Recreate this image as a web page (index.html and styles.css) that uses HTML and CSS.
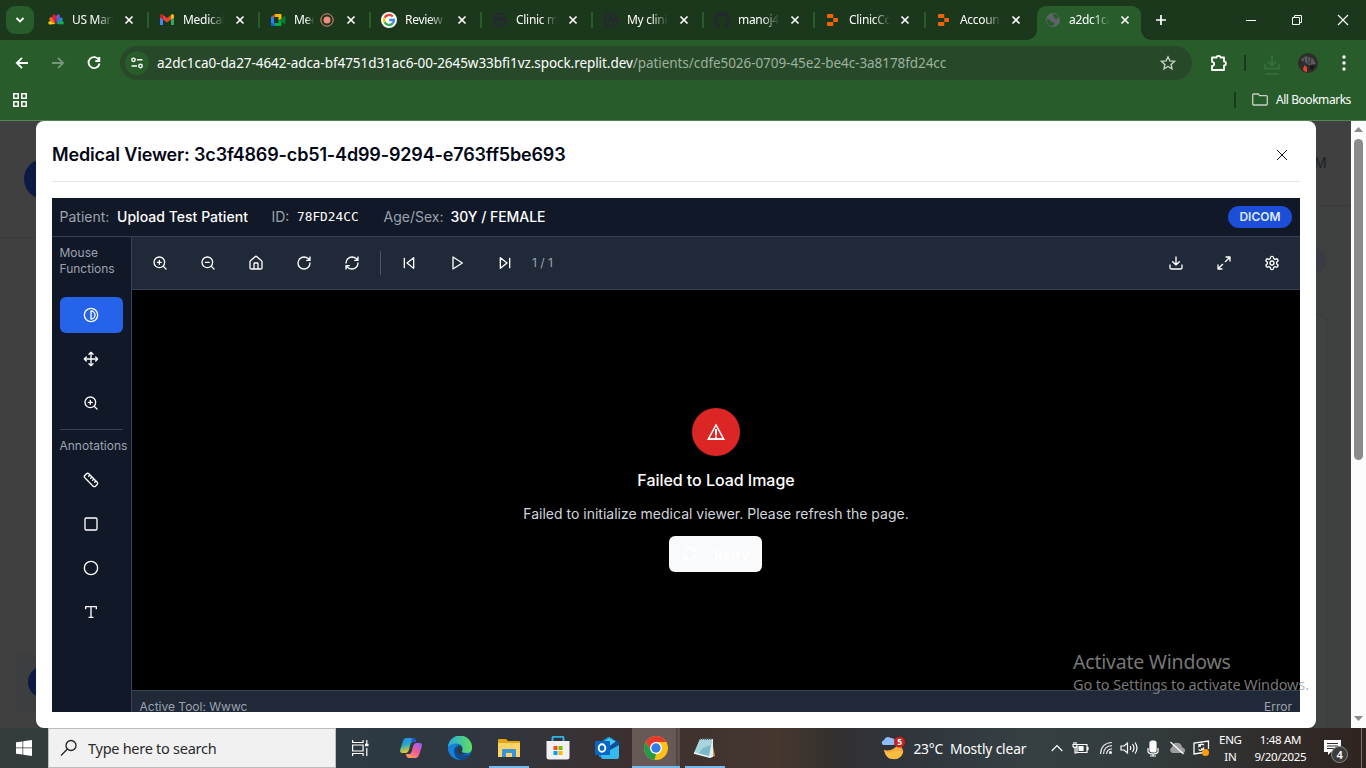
FILE: index.html
```html
<!DOCTYPE html>
<html lang="en">
<head>
<meta charset="utf-8">
<title>Medical Viewer</title>
<link rel="stylesheet" href="styles.css">
</head>
<body>
<svg class="defs" width="0" height="0" aria-hidden="true">
  <symbol id="x" viewBox="0 0 10 10"><path d="M1.5 1.5l7 7M8.5 1.5l-7 7" fill="none" stroke="currentColor" stroke-width="1.7"/></symbol>
  <symbol id="zoomin" viewBox="0 0 24 24"><circle cx="11" cy="11" r="8"/><path d="M21 21l-4.35-4.35M11 8v6M8 11h6"/></symbol>
  <symbol id="zoomout" viewBox="0 0 24 24"><circle cx="11" cy="11" r="8"/><path d="M21 21l-4.35-4.35M8 11h6"/></symbol>
  <symbol id="refresh" viewBox="0 0 24 24"><path d="M3 12a9 9 0 0 1 9-9 9.75 9.75 0 0 1 6.74 2.74L21 8M21 3v5h-5M21 12a9 9 0 0 1-9 9 9.75 9.75 0 0 1-6.74-2.74L3 16M8 16H3v5"/></symbol>
  <symbol id="replit" viewBox="0 0 16 16"><path d="M3 2h4.5q.8 0 .8.8V6H3q-1 0-1-.8V2.800Q2 2 3 2zM8.300 6H12q1 0 1 .8v2.400q0 .8-1 .8H8.300zM3 10h5.300v3.200q0 .8-.8.8H3q-1 0-1-.8v-2.400Q2 10 3 10z" fill="#f26207"/></symbol>
  <symbol id="copilot" viewBox="0 0 16 16"><path d="M2.500 6C1.800 2 3 1 5.500 1 7.500 1 8 2 8 3c0-1 .5-2 2.500-2C13 1 14.200 2 13.500 6c2 1 2 2 2 4-1 3-4.500 5-7.500 5S1.500 13 .5 10c0-2 0-3 2-4z" fill="#24292f"/><path d="M4 3h2.500v2.500h-3zM9.500 3H12l.5 2.500h-3zM3.500 8.500h9v3.300q-4.500 2-9 0z" fill="#1b3a1c"/><path d="M6 9v2.500M10 9v2.500" stroke="#24292f" stroke-width="1.500"/></symbol>
</svg>

<header class="tabstrip">
  <div class="tabsearch"><svg width="10" height="10" viewBox="0 0 10 10"><path d="M1.500 3l3.500 3.500L8.500 3" fill="none" stroke="#fff" stroke-width="1.900"/></svg></div>
  <div class="tab"><svg class="fav" viewBox="0 0 16 16"><path d="M7.500 12L1 12.500Q-1 9 3 9z" fill="#fccc12"/><path d="M7.500 12L2 9Q0 4 4.500 5.500z" fill="#f37021"/><path d="M7.500 11.500L4 5.500Q5 0 8 4z" fill="#e51e3c"/><path d="M8.500 11.500L8 4Q12 0 12 5.500z" fill="#7657b8"/><path d="M8.500 12l3-6Q16 4 14 9z" fill="#1c8bd8"/><path d="M8.500 12l5-3Q17 9 15 12.500z" fill="#12b24b"/></svg><span class="tt">US Mark</span><svg class="cl"><use href="#x"/></svg></div>
  <div class="tab"><svg class="fav" viewBox="0 0 16 16"><path d="M1 4v9h3V7z" fill="#4285f4"/><path d="M12 7v6h3V4z" fill="#34a853"/><path d="M1 3.500Q2 1.500 4 3l4 3 4-3q2-1.500 3 .5L12 7.500 8 10.500 4 7.500z" fill="#ea4335"/><path d="M1 3.500Q2 1.500 4 3v4.500L1 5.500z" fill="#c5221f"/><path d="M15 3.500Q14 1.500 12 3v4.500l3-2z" fill="#fbbc04"/></svg><span class="tt">Medical</span><svg class="cl"><use href="#x"/></svg></div>
  <div class="tab"><svg class="fav" viewBox="0 0 16 16"><path d="M1 5v6h3V5z" fill="#2684fc"/><path d="M1 5l4-3v3z" fill="#ea4335"/><path d="M1 11v2q0 1 1 1h3v-3z" fill="#0066da"/><path d="M5 2h5.500q1 0 1 1v4.500L8.500 8V5H5z" fill="#ffba00"/><path d="M5 11h3.500V8l3 1v4q0 1-1 1H5z" fill="#00ac47"/><path d="M10 8l4.500-4q.8-.4.8.5v7q0 .9-.8.500z" fill="#00832d"/></svg><span class="tt short">Mee</span><svg class="rec" viewBox="0 0 14 14"><circle cx="7" cy="7" r="6.200" fill="none" stroke="#f28b82" stroke-width="1"/><circle cx="7" cy="7" r="3.500" fill="#f28b82"/></svg><svg class="cl"><use href="#x"/></svg></div>
  <div class="tab"><svg class="fav" viewBox="0 0 16 16"><circle cx="8" cy="8" r="8" fill="#fff"/><g fill="none" stroke-width="2.300"><path d="M11.700 4.500A5 5 0 0 0 3.600 5.700" stroke="#ea4335"/><path d="M3.600 5.700a5 5 0 0 0 0 4.600" stroke="#fbbc05"/><path d="M3.600 10.300a5 5 0 0 0 7.800 1.300" stroke="#34a853"/><path d="M11.400 11.600A5 5 0 0 0 13 8H8.200" stroke="#4285f4"/></g></svg><span class="tt">Review</span><svg class="cl"><use href="#x"/></svg></div>
  <div class="tab"><svg class="fav"><use href="#copilot"/></svg><span class="tt">Clinic m</span><svg class="cl"><use href="#x"/></svg></div>
  <div class="tab"><svg class="fav"><use href="#copilot"/></svg><span class="tt">My clini</span><svg class="cl"><use href="#x"/></svg></div>
  <div class="tab"><svg class="fav" viewBox="0 0 16 16"><path d="M8 0a8 8 0 0 0-2.500 15.600c.4.100.5-.2.500-.4v-1.500c-2 .5-2.500-.5-2.700-1-.3-.6-.6-1-1-1.200 1-.4 1.700.5 2 1 .5.800 1.300.7 1.800.5.100-.5.300-.8.500-1C4.800 11.800 3 11 3 8c0-.9.300-1.600.8-2.200-.1-.4-.3-1.100.1-2.200 0 0 .7-.2 2.200.8a7.500 7.500 0 0 1 4 0c1.500-1 2.200-.8 2.200-.8.400 1.100.2 1.800.1 2.200.5.600.8 1.300.8 2.200 0 3-1.900 3.800-3.700 4 .3.200.6.700.6 1.500v1.700c0 .2.100.5.500.4A8 8 0 0 0 8 0z" fill="#24292f"/></svg><span class="tt">manoj4</span><svg class="cl"><use href="#x"/></svg></div>
  <div class="tab"><svg class="fav"><use href="#replit"/></svg><span class="tt">ClinicCo</span><svg class="cl"><use href="#x"/></svg></div>
  <div class="tab last"><svg class="fav"><use href="#replit"/></svg><span class="tt">Accoun</span><svg class="cl"><use href="#x"/></svg></div>
  <div class="tab active"><svg class="fav" viewBox="0 0 16 16"><circle cx="8" cy="8" r="7" fill="#5f6368"/><path d="M2 7q3 0 4 2t3 1q1 2-1 4Q3 14 2 10zM8 2v2q2 1 1 2 2 2 4 0l1-1Q12 2 8 2z" fill="#285d2b"/></svg><span class="tt">a2dc1ca</span><svg class="cl"><use href="#x"/></svg></div>
  <svg class="newtab" viewBox="0 0 12 12"><path d="M6 1v10M1 6h10" stroke="#fff" stroke-width="1.700"/></svg>
  <div class="winbtns">
    <svg width="12" height="12"><path d="M1 6.500h10" stroke="#fff"/></svg>
    <svg width="12" height="12" fill="none" stroke="#fff"><path d="M1.500 3.500h7v7h-7zM3.500 3.500v-2h7v7h-2"/></svg>
    <svg width="12" height="12"><path d="M1 1l10 10M11 1L1 11" stroke="#fff" stroke-width="1.100"/></svg>
  </div>
</header>

<div class="addr">
  <svg class="nav" viewBox="0 0 16 16"><path d="M14 8H3M8 2.800L2.800 8 8 13.200"/></svg>
  <svg class="nav dim" viewBox="0 0 16 16"><path d="M2 8h11M8 2.800L13.200 8 8 13.200"/></svg>
  <svg class="nav" viewBox="0 0 16 16"><path d="M13 5.200A5.500 5.500 0 1 0 13.500 8.500M13.300 2v4H9.300"/></svg>
  <div class="omni">
    <span class="site"><svg width="14" height="14" viewBox="0 0 14 14" fill="none" stroke="#fff" stroke-width="1.400"><circle cx="3.500" cy="3.800" r="1.700"/><path d="M7 3.800h5.500M1.500 10H7"/><circle cx="10.500" cy="10" r="1.700"/></svg></span>
    <span class="url"><b>a2dc1ca0-da27-4642-adca-bf4751d31ac6-00-2645w33bfi1vz.spock.replit.dev</b><i>/patients/cdfe5026-0709-45e2-be4c-3a8178fd24cc</i></span>
    <svg class="star" viewBox="0 0 16 16"><path d="M8 1.800l1.900 4.100 4.500.5-3.300 3 .9 4.400L8 11.500l-4 2.300.9-4.400-3.300-3 4.500-.5z" fill="none" stroke="#c5cfc5" stroke-width="1.400"/></svg>
  </div>
  <svg class="puzzle" viewBox="0 0 18 18"><path d="M2 3.500h4.500a2 1.700 0 0 1 4 0H14v4a1.900 2 0 0 1 0 4V16H2v-4a2.100 2.100 0 0 0 0-4.200z" fill="none" stroke="#fff" stroke-width="1.800" stroke-linejoin="round"/></svg>
  <span class="vsep"></span>
  <svg class="dl" viewBox="0 0 16 22"><path d="M8 1v10M4 7.500l4 4 4-4M1 10.500v4h14v-4M1.500 20h13" fill="none" stroke="#35713a" stroke-width="1.600"/></svg>
  <svg class="avatar" viewBox="0 0 20 20"><circle cx="10" cy="10" r="10" fill="#2e2d2c"/><path d="M3 7q5-7 12-1l3 5-7 1z" fill="#5c5c5c"/><path d="M6 5l1 6M10 3v8M13 4l-1 7" stroke="#303030"/><path d="M5 16l1.500-4L9 14.500v4.500q-3 0-4-3z" fill="#e6452d"/><path d="M11 13l6-1-3 6z" fill="#191919"/></svg>
  <svg class="dots" viewBox="0 0 4 16" fill="#fff"><circle cx="2" cy="2" r="1.700"/><circle cx="2" cy="8" r="1.700"/><circle cx="2" cy="14" r="1.700"/></svg>
</div>

<div class="bookmarks">
  <svg width="14" height="14" viewBox="0 0 14 14" fill="none" stroke="#fff" stroke-width="1.500"><path d="M.8.800h4.400v4.400H.8zM8.800.800h4.400v4.400H8.800zM.8 8.800h4.400v4.400H.8zM8.800 8.800h4.400v4.400H8.800z"/></svg>
  <span class="vsep"></span>
  <svg class="folder" width="16" height="13" viewBox="0 0 16 13"><path d="M1.700 1h4.500l1.500 1.700h6.600q1 0 1 1v7.300q0 1-1 1H1.700q-1 0-1-1V2q0-1 1-1z" fill="none" stroke="#c5cfc5" stroke-width="1.300"/></svg>
  <span class="allb">All Bookmarks</span>
</div>

<main class="page">
  <div class="under uleft"></div><div class="under uright"></div>
  <div class="under blob1"></div><div class="under card2"></div><div class="under blob2"></div>
  <div class="under utime">M</div><div class="under pill"></div><div class="under panel"></div>

  <section class="modal">
    <div class="mhead"><h2>Medical Viewer: 3c3f4869-cb51-4d99-9294-e763ff5be693</h2>
      <svg width="12" height="12" viewBox="0 0 12 12"><path d="M1 1l10 10M11 1L1 11" stroke="#0b1020" stroke-width="1"/></svg></div>
    <div class="viewer">
      <div class="pbar">
        <span class="k k1">Patient:</span><span class="v v1">Upload Test Patient</span>
        <span class="k k2">ID:</span><span class="mono">78FD24CC</span>
        <span class="k k3">Age/Sex:</span><span class="v v3">30Y / FEMALE</span>
        <span class="badge">DICOM</span>
      </div>
      <div class="vbody">
        <aside class="side">
          <p class="lbl first">Mouse<br>Functions</p>
          <div class="tool on"><svg class="ic" viewBox="0 0 24 24"><circle cx="12" cy="12" r="10"/><path d="M12 18a6 6 0 0 0 0-12v12z"/></svg></div>
          <div class="tool"><svg class="ic" viewBox="0 0 24 24"><path d="M5 9l-3 3 3 3M9 5l3-3 3 3M15 19l-3 3-3-3M19 9l3 3-3 3M2 12h20M12 2v20"/></svg></div>
          <div class="tool"><svg class="ic"><use href="#zoomin"/></svg></div>
          <hr>
          <p class="lbl">Annotations</p>
          <div class="tool"><svg class="ic" viewBox="0 0 24 24"><path d="M21.300 15.300a2.400 2.400 0 0 1 0 3.400l-2.600 2.600a2.400 2.400 0 0 1-3.400 0L2.700 8.700a2.410 2.410 0 0 1 0-3.400l2.600-2.600a2.410 2.410 0 0 1 3.400 0zM14.500 12.500l2-2M11.500 9.500l2-2M8.500 6.500l2-2M17.500 15.500l2-2"/></svg></div>
          <div class="tool"><svg class="ic" viewBox="0 0 24 24"><rect x="3" y="3" width="18" height="18" rx="2"/></svg></div>
          <div class="tool"><svg class="ic" viewBox="0 0 24 24"><circle cx="12" cy="12" r="10"/></svg></div>
          <div class="tool"><svg class="ic" viewBox="0 0 24 24"><path d="M4 7V4h16v3M9 20h6M12 4v16"/></svg></div>
        </aside>
        <div class="work">
          <div class="tbar">
            <span class="b"><svg class="ic"><use href="#zoomin"/></svg></span>
            <span class="b"><svg class="ic"><use href="#zoomout"/></svg></span>
            <span class="b"><svg class="ic" viewBox="0 0 24 24"><path d="M15 21v-8a1 1 0 0 0-1-1h-4a1 1 0 0 0-1 1v8M3 10a2 2 0 0 1 .709-1.528l7-5.999a2 2 0 0 1 2.582 0l7 5.999A2 2 0 0 1 21 10v9a2 2 0 0 1-2 2H5a2 2 0 0 1-2-2z"/></svg></span>
            <span class="b"><svg class="ic" viewBox="0 0 24 24"><path d="M21 12a9 9 0 1 1-9-9c2.520 0 4.930 1 6.740 2.740L21 8M21 3v5h-5"/></svg></span>
            <span class="b"><svg class="ic"><use href="#refresh"/></svg></span>
            <span class="tsep"></span>
            <span class="b"><svg class="ic" viewBox="0 0 24 24"><path d="M19 20L9 12l10-8zM5 19V5"/></svg></span>
            <span class="b"><svg class="ic" viewBox="0 0 24 24"><path d="M6 3l14 9-14 9z"/></svg></span>
            <span class="b"><svg class="ic" viewBox="0 0 24 24"><path d="M5 4l10 8-10 8zM19 5v14"/></svg></span>
            <span class="cnt">1 / 1</span>
            <span class="b push"><svg class="ic" viewBox="0 0 24 24"><path d="M21 15v4a2 2 0 0 1-2 2H5a2 2 0 0 1-2-2v-4M7 10l5 5 5-5M12 15V3"/></svg></span>
            <span class="b"><svg class="ic" viewBox="0 0 24 24"><path d="M15 3h6v6M21 3l-7 7M3 21l7-7M9 21H3v-6"/></svg></span>
            <span class="b"><svg class="ic" viewBox="0 0 24 24"><path d="M12.220 2h-.44a2 2 0 0 0-2 2v.18a2 2 0 0 1-1 1.730l-.43.250a2 2 0 0 1-2 0l-.15-.08a2 2 0 0 0-2.730.73l-.22.380a2 2 0 0 0 .73 2.730l.15.100a2 2 0 0 1 1 1.720v.51a2 2 0 0 1-1 1.740l-.15.090a2 2 0 0 0-.73 2.730l.22.380a2 2 0 0 0 2.730.73l.15-.08a2 2 0 0 1 2 0l.43.250a2 2 0 0 1 1 1.730V20a2 2 0 0 0 2 2h.44a2 2 0 0 0 2-2v-.18a2 2 0 0 1 1-1.730l.43-.25a2 2 0 0 1 2 0l.15.080a2 2 0 0 0 2.730-.73l.22-.39a2 2 0 0 0-.73-2.730l-.15-.08a2 2 0 0 1-1-1.740v-.5a2 2 0 0 1 1-1.740l.15-.09a2 2 0 0 0 .73-2.730l-.22-.38a2 2 0 0 0-2.730-.73l-.15.080a2 2 0 0 1-2 0l-.43-.25a2 2 0 0 1-1-1.730V4a2 2 0 0 0-2-2z"/><circle cx="12" cy="12" r="3"/></svg></span>
          </div>
          <div class="canvas">
            <div class="warn"><svg width="20" height="18" viewBox="0 0 20 18"><path d="M10 2L2.200 16.300h15.600z" fill="none" stroke="#fff" stroke-width="1.500"/><path d="M2 16h16" stroke="#fff" stroke-width="1.700"/><path d="M10 6v6.500M10 13.500v1.500" stroke="#fff" stroke-width="2"/></svg></div>
            <h3>Failed to Load Image</h3>
            <p>Failed to initialize medical viewer. Please refresh the page.</p>
            <button class="retry"><svg class="ic"><use href="#refresh"/></svg><span>Retry</span></button>
          </div>
          <div class="status"><span>Active Tool: Wwwc</span><span>Error</span></div>
        </div>
      </div>
    </div>
  </section>
  <div class="scroll"><svg width="9" height="5"><path d="M0 5L4.500 0 9 5z" fill="#8b8b8b"/></svg><span class="thumb"></span><svg class="dn" width="9" height="5"><path d="M0 0h9L4.500 5z" fill="#8b8b8b"/></svg></div>
  <div class="mark"><div class="m1">Activate Windows</div><div class="m2">Go to Settings to activate Windows.</div></div>
</main>

<footer class="taskbar">
  <div class="start"><svg width="16" height="16" viewBox="0 0 16 16" fill="#fff"><path d="M0 2.300l6.500-.9v6.200H0zM7.200 1.300L16 0v7.600H7.200zM0 8.300h6.500v6.300L0 13.700zM7.200 8.300H16V16l-8.800-1.300z"/></svg></div>
  <div class="search"><svg width="18" height="18" viewBox="0 0 18 18" fill="none" stroke="#222" stroke-width="1.300"><circle cx="11" cy="6.500" r="5"/><path d="M7.500 10L1 16.500"/></svg><span>Type here to search</span></div>
  <div class="app"><svg width="17" height="16" viewBox="0 0 17 16" fill="none" stroke="#fff" stroke-width="1.200"><path d="M.600 0v2.500h10.500V0M.600 5h10.500v6H.600zM.600 16v-2.500h10.500V16M14.800 0v4M14.800 8v8"/><path d="M13 5h3.500" stroke-width="2.500"/></svg></div>
  <div class="app cp"><svg width="24" height="24" viewBox="0 0 24 24"><defs><linearGradient id="g1" x2=".3" y2="1"><stop stop-color="#2689f3"/><stop offset=".5" stop-color="#28a8c8"/><stop offset="1" stop-color="#f4ca1b"/></linearGradient><linearGradient id="g2" x1=".8" x2=".2" y2="1"><stop stop-color="#a45cf4"/><stop offset=".5" stop-color="#f05b95"/><stop offset="1" stop-color="#fb9b63"/></linearGradient></defs><path d="M7 2h7q2 0 2.500 2l.7 2H14q-2 0-2.500 2l-2 7q-.7 2-3 2H3.500Q.5 17 1.200 13.500L4 5Q5 2 7 2z" fill="url(#g1)"/><path d="M17 22h-7q-2 0-2.500-2l-.7-2H10q2 0 2.500-2l2-7q.7-2 3-2h3q3 0 2.300 3.500L20 19q-1 3-3 3z" fill="url(#g2)"/><path d="M13 2h1q2 0 2.500 2l.7 2H14q-1.300 0-2 1z" fill="#2458c8"/></svg></div>
  <div class="app cp"><svg width="24" height="24" viewBox="0 0 24 24"><defs><linearGradient id="g3"><stop stop-color="#2ba9e8"/><stop offset="1" stop-color="#60df57"/></linearGradient></defs><circle cx="12" cy="12" r="12" fill="#1269bd"/><path d="M0 11A12 12 0 0 1 24 12q0 5-5.500 5-5 0-4.500-2 2-3-1-6Q7 5 0 11z" fill="url(#g3)"/><path d="M0 12q4-6 10-3-4 3-2 8 2 4 7 6-4 2-9-1Q0 18 0 12z" fill="#1683d8"/><path d="M9 10q-1 7 6 9 4 1 7-1-3 6-9 6-7-2-7-9 0-4 3-5z" fill="#114a8b"/><path d="M11 9q4 2 3 6-1 3 5 2-5 3-9 0-3-4 1-8z" fill="#293946"/></svg></div>
  <div class="app run r1"><svg width="22" height="19" viewBox="0 0 22 19"><path d="M0 1q0-1 1-1h7l2 2h11q1 0 1 1v14H0z" fill="#e5a50e"/><path d="M0 4h22v14H0z" fill="#fdd465"/><path d="M4 11q0-1 1-1h12q1 0 1 1v7h-4v-4H8v4H4z" fill="#3994df"/></svg></div>
  <div class="app"><svg width="24" height="24" viewBox="0 0 24 24"><path d="M6.500 7V1.800q0-1 1-1h9q1 0 1 1V7" fill="none" stroke="#2eb4ec" stroke-width="1.900"/><path d="M.5 5h23v16q0 2.500-2.500 2.500H3Q.5 23.500.5 21z" fill="#f1f1f3"/><path d="M7.500 10h4v4h-4z" fill="#f25022"/><path d="M12.500 10h4v4h-4z" fill="#7fba00"/><path d="M7.500 15h4v4h-4z" fill="#00a4ef"/><path d="M12.500 15h4v4h-4z" fill="#ffb900"/></svg></div>
  <div class="app"><svg width="26" height="24" viewBox="0 0 26 24"><path d="M5 7L14 1q1-.6 2 0l9 6v14H5z" fill="#1689dd"/><path d="M8 7l7-5 9 5-9 8z" fill="#48cdf5"/><path d="M14 11l10-7 1 5-9 7z" fill="#124b9b"/><path d="M7 14h9l9-5v12q0 2-2 2H9q-2 0-2-2z" fill="#35b9ee"/><rect x="1" y="5" width="15" height="14" rx="1" fill="#0867c2"/><ellipse cx="8" cy="12" rx="3.300" ry="3.800" fill="none" stroke="#fff" stroke-width="1.900"/></svg></div>
  <div class="app run r2"><svg width="24" height="24" viewBox="0 0 24 24"><circle cx="12" cy="12" r="12" fill="#fbc116"/><path d="M1.600 6A12 12 0 0 1 22.400 6H12L7 15z" fill="#e33b2e"/><path d="M1.600 6L7 15l5 3-1.500 5.900A12 12 0 0 1 1.600 6z" fill="#229a49"/><circle cx="12" cy="12" r="6" fill="#fff"/><circle cx="12" cy="12" r="4.700" fill="#2f7de9"/></svg></div>
  <div class="app run r3"><svg width="24" height="23" viewBox="0 0 24 23"><path d="M19 4l3 15-3 1-2-14z" fill="#c39b55"/><path d="M8 2h12v16l-2 3L2 16z" fill="#e4edf0"/><path d="M7 2h12l-3 18L1 16z" fill="#7bb8c8"/><path d="M7 2h12l-1 6-8 3-5 6-4-1z" fill="#a8d4de"/><path d="M7 2h12" stroke="#58646a" stroke-width="2" stroke-dasharray="1 1"/><path d="M1 16l15 4 4-1" fill="none" stroke="#eef4f5" stroke-width="1.500"/></svg></div>
  <div class="tray">
    <svg class="wx" width="24" height="24" viewBox="0 0 24 24"><path d="M3 14q9 2 14-6 6 4 5 9-3 7-10 6-7 0-9-9z" fill="#f9a93b"/><path d="M3 14q6 5 12 0l7 2q-3 8-10 7-7 0-9-9z" fill="#fbbc42"/><path d="M2 9q-3-3 1-5 2-5 7-2 4 0 4 4 1 3-2 3z" fill="#8ebcf7"/><circle cx="18.500" cy="6" r="5.500" fill="#c5221f"/><text x="16.200" y="9.200" font-family="Noto Sans, sans-serif" font-size="8.500" font-weight="700" fill="#fff">5</text></svg>
    <span class="wtx">23°C&nbsp; Mostly clear</span>
    <svg class="t1" width="12" height="8"><path d="M.7 7L6 1.500 11.300 7" fill="none" stroke="#fff" stroke-width="1.200"/></svg>
    <svg class="t2" width="17" height="14" fill="none" stroke="#fff" stroke-width="1.200"><path d="M5 3.500h10v8H5zM16 6v3M1 3.500h4v2q-2 2-4 0zM2 1v2M4 1v2M3 7v5h2"/><path d="M7 5.500h4v4H7z" fill="#fff"/></svg>
    <svg class="t3" width="14" height="14" viewBox="0 0 14 14" fill="none" stroke="#e3e3e3" stroke-width="1.200"><path d="M1.500 13Q2 2 13 1.500M4.500 13Q5 5 13 4.700M7.500 13Q8 8 13 7.800"/><circle cx="11.500" cy="11.500" r="1" fill="#fff"/></svg>
    <svg class="t4" width="18" height="14" fill="none" stroke="#fff" stroke-width="1.200"><path d="M1 5v4h3l3.500 3V2L4 5zM10 5q1.500 2 0 4M12.500 3q3 4 0 8M15 1.500q4 5.500 0 11"/></svg>
    <svg class="t5" width="12" height="17" fill="none" stroke="#fff" stroke-width="1.200"><rect x="3" y="1" width="6" height="11" rx="2" fill="#fff"/><path d="M1 8v4q1 2 5 2t5-2V8M6 14v2M3 16h6"/></svg>
    <svg class="t6" width="17" height="14"><path d="M3 12q-4-3 0-6 1-5 6-4 3 0 4 4 5 2 2 6z" fill="#9b9d9e"/><path d="M1.500 1l13 12" stroke="#fff" stroke-width="1.200"/></svg>
    <svg class="t7" width="17" height="16" viewBox="0 0 17 16" fill="none" stroke="#fff" stroke-width="1.300"><path d="M11 12.500L1 14V3l14.500-2v8M11 5q-3-2-5 1V4M5.500 9.500q3 2 5-1v2M6 6h2M8 9h3"/><circle cx="12.500" cy="12.500" r="3.500" fill="#ff9c0a" stroke="none"/></svg>
    <div class="two lang">ENG<br>IN</div><div class="two clock">1:48 AM<br>9/20/2025</div>
    <svg class="note" width="25" height="25" viewBox="0 0 25 25"><path d="M0 1h17v12H7l-3 3v-3H0z" fill="#fff"/><path d="M3 4.500h11M3 7h11M3 9.500h7" stroke="#302f2e"/><circle cx="15.500" cy="15.500" r="8" fill="#3c3c3c" stroke="#8a8886"/><text x="12.500" y="19.800" font-family="Noto Sans, sans-serif" font-size="11" font-weight="600" fill="#fff">4</text></svg>
    <span class="desk"></span>
  </div>
</footer>
</body>
</html>
```
FILE: styles.css
```css
* { box-sizing: border-box; }
body { margin: 0; width: 1366px; height: 768px; overflow: hidden; display: flex; flex-direction: column; background: #285d2b; font-family: "Noto Sans", "Open Sans", sans-serif; }
svg { flex: none; display: block; }
.defs { position: absolute; }
h2, h3, p { margin: 0; }

/* browser chrome */
.tabstrip { height: 40px; flex: none; display: flex; background: #1b381c; position: relative; }
.tabsearch { width: 28px; height: 28px; margin: 6px 4px 0 6px; border-radius: 9px; background: #285d2b; display: flex; align-items: center; justify-content: center; }
.tab { width: 111px; height: 40px; display: flex; align-items: center; padding-left: 10px; flex: none; background: linear-gradient(#285d2b, #285d2b) 109px 12px / 2px 16px no-repeat; }
.tab.last { background: none; }
.fav { width: 16px; height: 16px; }
.tt { width: 41px; margin-left: 8px; overflow: hidden; white-space: nowrap; color: #fff; font-size: 12px; line-height: 18px; letter-spacing: -.3px; -webkit-mask-image: linear-gradient(90deg, #000 60%, transparent 100%); mask-image: linear-gradient(90deg, #000 60%, transparent 100%); }
.tt.short { width: 20px; }
.rec { width: 14px; height: 14px; margin: 0 -13px 0 6px; }
.cl { width: 10px; height: 10px; margin-left: 11px; color: #fff; }
.tab:nth-child(n+9) .cl { margin-left: 10px; }
.tab .rec ~ .cl { margin-left: 25px; }
.tab.active { width: 104px; height: 34px; margin-top: 6px; border-radius: 9px 9px 0 0; background: #285d2b; padding: 0 0 6px 8px; position: relative; }
.tab.active::before, .tab.active::after { content: ""; position: absolute; bottom: 0; width: 10px; height: 10px; }
.tab.active::before { left: -10px; background: radial-gradient(circle at 0 0, transparent 9.500px, #285d2b 10px); }
.tab.active::after { right: -10px; background: radial-gradient(circle at 100% 0, transparent 9.500px, #285d2b 10px); }
.newtab { width: 12px; height: 12px; margin: 14px 0 0 14px; }
.winbtns { display: flex; gap: 34px; margin: 14px 0 0 78px; }
.addr { height: 46px; flex: none; display: flex; align-items: center; padding-left: 14px; background: #285d2b; }
.nav { width: 16px; height: 16px; margin-right: 20px; fill: none; stroke: #fff; stroke-width: 1.800; }
.nav.dim { stroke: #76957a; }
.omni { width: 1072px; height: 34px; margin-left: -2px; border-radius: 17px; background: #27492a; display: flex; align-items: center; padding: 0 16px 0 5px; }
.site { width: 24px; height: 24px; border-radius: 50%; background: #285d2b; display: flex; align-items: center; justify-content: center; }
.url { margin-left: 8px; font-size: 13.500px; letter-spacing: -.06px; white-space: nowrap; color: #fff; }
.url b { font-weight: 400; }
.url i { font-style: normal; color: #9db09e; }
.star { width: 16px; height: 16px; margin-left: auto; }
.puzzle { width: 18px; height: 18px; margin-left: 18px; }
.vsep { width: 2px; height: 16px; background: #1b381c; }
.addr .vsep { margin-left: 16px; }
.dl { width: 16px; height: 22px; margin: 4px 0 0 18px; }
.avatar { width: 20px; height: 20px; margin-left: 18px; }
.dots { width: 4px; height: 16px; margin-left: 24px; }
.bookmarks { height: 35px; flex: none; display: flex; align-items: center; padding: 0 15px 7px 13px; background: #285d2b; border-bottom: 1px solid #53845a; }
.bookmarks .vsep { margin-left: auto; }
.folder { margin: 0 8px 0 16px; }
.allb { color: #fff; font-size: 12px; letter-spacing: -.45px; white-space: nowrap; width: 75px; }

/* dimmed application behind the dialog */
.page { height: 607px; flex: none; position: relative; background: #404040; padding: 0 50px 0 36px; overflow: hidden; }
.under { position: absolute; }
.uleft { left: 0; top: 116px; width: 36px; height: 1px; background: #393939; }
.uright { left: 1316px; top: 84px; width: 35px; height: 523px; background: #3f4140; border-top: 1px solid #393b3a; }
.blob1 { left: 24px; top: 38px; width: 40px; height: 40px; border-radius: 50%; background: #0b1b44; }
.card2 { left: 16px; top: 531px; width: 40px; height: 60px; border-radius: 6px; background: #3d3e3f; }
.blob2 { left: 28px; top: 545px; width: 32px; height: 32px; border-radius: 50%; background: #0b1b44; }
.utime { left: 1314px; top: 32px; font: 14px/20px Inter, sans-serif; color: #1c2028; }
.pill { left: 1290px; top: 128px; width: 37px; height: 23px; border-radius: 12px; background: #393c40; }
.panel { left: 1290px; top: 193px; width: 37px; height: 420px; border: 1px solid #393b3a; border-radius: 8px; background: #404141; }

/* dialog */
.modal { position: relative; width: 1280px; height: 607px; border-radius: 8px; background: #fff; padding: 0 16px 16px; font-family: Inter, sans-serif; display: flex; flex-direction: column; }
.mhead { height: 61px; flex: none; border-bottom: 1px solid #e5e7f0; display: flex; justify-content: space-between; align-items: center; padding: 7px 12px 0 0; }
h2 { font-size: 18px; line-height: 24px; font-weight: 600; color: #030816; letter-spacing: -.155px; }
.viewer { margin-top: 16px; height: 514px; background: #111827; display: flex; flex-direction: column; overflow: hidden; }
.pbar { height: 39px; flex: none; border-bottom: 1px solid #374151; display: flex; align-items: center; padding: 0 8px 1px 7.500px; font-size: 14px; white-space: nowrap; }
.k { color: #9ca3af; } .v { color: #fff; font-weight: 500; letter-spacing: .03px; }
.k1 { width: 57.500px; } .v1 { width: 154.500px; } .k2 { width: 25.500px; } .k3 { width: 67px; }
.v3 { letter-spacing: -.04px; }
.mono { width: 86.500px; color: #fff; font: 12.800px "DejaVu Sans Mono", monospace; }
.badge { margin-left: auto; height: 22px; width: 64px; border-radius: 11px; background: #1d4ed8; color: #dbeafe; font-size: 12px; font-weight: 600; line-height: 22px; text-align: center; }
.vbody { display: flex; flex: 1; min-height: 0; }
.side { width: 80px; flex: none; border-right: 1px solid #374151; padding: 8px 8px 8px 7.500px; display: flex; flex-direction: column; gap: 8px; }
.lbl { font-size: 12px; line-height: 16px; color: #9ca3af; white-space: nowrap; }
.lbl.first { margin-bottom: 12px; }
.tool { height: 36px; margin-left: .5px; padding-right: 1px; flex: none; border-radius: 6px; display: flex; align-items: center; justify-content: center; }
.tool.on { background: #2563eb; }
.side hr { height: 1px; margin: 0 0 0 .5px; border: 0; background: #374151; flex: none; }
.ic { width: 16px; height: 16px; fill: none; stroke: #fff; stroke-width: 2; stroke-linecap: round; stroke-linejoin: round; }
.work { flex: 1; display: flex; flex-direction: column; }
.tbar { height: 53px; flex: none; background: #1f2937; border-bottom: 1px solid #374151; display: flex; align-items: center; gap: 8px; padding: 0 8px; }
.b { width: 40px; height: 36px; flex: none; display: flex; align-items: center; justify-content: center; }
.tsep { width: 1px; height: 24px; background: #4b5563; }
.cnt { font-size: 12px; color: #9ca3af; margin: 0 0 1px -1px; }
.push { margin-left: auto; }
.canvas { height: 400px; flex: none; background: #000; display: flex; flex-direction: column; align-items: center; padding-top: 118px; }
.warn { width: 48px; height: 48px; border-radius: 50%; background: #dc2626; display: flex; align-items: center; justify-content: center; }
h3 { margin-top: 12px; font-size: 16px; line-height: 24px; font-weight: 500; color: #fff; letter-spacing: -.04px; }
.canvas p { margin-top: 12px; font-size: 14px; line-height: 20px; color: #d1d5db; }
.retry { margin: 12px 1px 0 0; width: 93px; height: 36px; border: 0; border-radius: 6px; background: #f9fafb; color: #fff; display: flex; align-items: center; gap: 16px; padding: 0 13px; font: 500 14px Inter, sans-serif; }
.status { height: 32px; flex: none; background: #1f2937; border-top: 1px solid #374151; display: flex; justify-content: space-between; padding: 8px 8px 0 7.500px; font-size: 12px; line-height: 16px; color: #9ca3af; }
.scroll { position: absolute; right: 0; top: 0; width: 15px; height: 607px; background: #fcfcfc; display: flex; flex-direction: column; align-items: center; padding: 6px 0 7px; }
.thumb { width: 9px; height: 321px; margin-top: 7px; border-radius: 5px; background: #8b8b8b; }
.dn { margin-top: auto; }
.mark { position: absolute; left: 1073px; top: 527px; color: rgba(160, 160, 160, .75); white-space: nowrap; }
.m1 { font-size: 19.500px; line-height: 27px; letter-spacing: -.22px; }
.m2 { font-size: 14.500px; line-height: 18px; letter-spacing: -.12px; }

/* desktop taskbar */
.taskbar { height: 40px; flex: none; display: flex; background: linear-gradient(90deg, #343d3c 0, #2d3a43 27%, #31363f 36%, #3b302f 46%, #46372f 57%, #33302f 61%, #2f343a 65%, #354043 75%, #333c3e 84%, #302e2d 92%, #302420 100%); color: #fff; }
.start { width: 48px; display: flex; align-items: center; justify-content: center; }
.search { width: 288px; background: #f1f1f1; border: 1px solid #bdbdbd; display: flex; align-items: center; padding-left: 11px; color: #2b2b2b; font-size: 14.500px; white-space: nowrap; }
.search span { margin-left: 10px; letter-spacing: -.27px; }
.app { width: 49.300px; flex: none; display: flex; align-items: center; justify-content: center; }
.app.cp { padding-left: 2px; }
.run { background: linear-gradient(#76b9ed, #76b9ed) 5px 38px / 40px 2px no-repeat; }
.r2 { background: linear-gradient(#76b9ed, #76b9ed) 0 38px / 48px 2px no-repeat, linear-gradient(90deg, #665956 44px, #4b413f 44px, #5b504d 46px, #5b504d 48px, transparent 48px); }
.r3 { background-position: 4px 38px; padding-right: 2px; }
.tray { flex: 1; position: relative; display: flex; align-items: center; padding-left: 151px; }
.wtx { width: 133px; margin-left: 8px; font-size: 13.800px; white-space: nowrap; letter-spacing: -.15px; }
.t1 { margin-left: 5px; } .t2 { margin-left: 9px; } .t3 { margin-left: 10px; } .t4 { margin-left: 7px; } .t5 { margin-left: 9px; } .t6 { margin-left: 10px; } .t7 { margin-left: 7px; }
.two { text-align: center; font-size: 11.500px; line-height: 17px; letter-spacing: -.3px; white-space: nowrap; flex: none; padding-bottom: 1px; }
.lang { width: 28px; margin-left: 6px; }
.clock { width: 56px; margin-left: 8px; }
.note { margin: 6px 0 0 16px; }
.desk { margin-left: auto; width: 5px; height: 40px; border-left: 1px solid #77726f; }
```
